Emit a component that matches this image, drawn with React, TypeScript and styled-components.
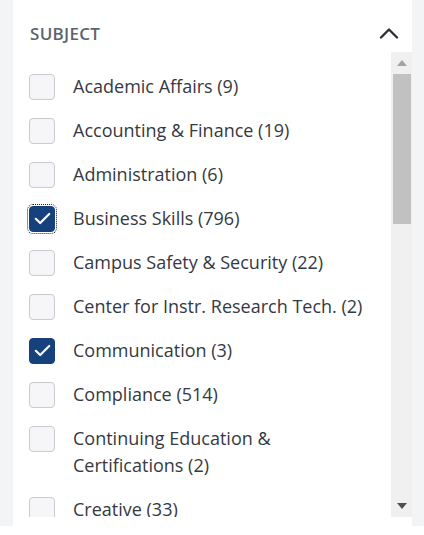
import React from 'react'
import styled, { createGlobalStyle, css } from 'styled-components'

const GlobalStyle = createGlobalStyle`
  html, body {
    margin: 0;
    padding: 0;
    background: #ffffff;
  }
  body {
    font-family: "Open Sans", "Noto Sans", "Liberation Sans", sans-serif;
    color: #333740;
  }
`

const Sidebar = styled.div`
  margin-top: 9px;
  background: #f3f4f6;
  padding: 0 12px 7px 13px;
  width: 424px;
  height: 526px;
  box-sizing: border-box;
`

const Panel = styled.section`
  background: #ffffff;
  margin-top: -9px;
  height: 528px;
  display: flex;
  flex-direction: column;
  box-sizing: border-box;
`

const Header = styled.div`
  display: flex;
  align-items: center;
  justify-content: space-between;
  height: 52px;
  padding: 14px 13px 0 17px;
  box-sizing: border-box;
`

const Title = styled.h3`
  margin: 0;
  font-size: 17px;
  font-weight: 600;
  letter-spacing: 0.3px;
  color: #5b6371;
`

const Body = styled.div`
  display: flex;
  height: 465px;
`

const List = styled.ul`
  flex: 1;
  list-style: none;
  margin: 0;
  padding: 21px 0 0 16px;
  overflow: hidden;
  display: flex;
  flex-direction: column;
  gap: 17px;
`

const Item = styled.li`
  display: flex;
  align-items: flex-start;
  gap: 18px;
  padding-right: 20px;
`

const Box = styled.span<{ $checked: boolean; $focused?: boolean }>`
  flex: none;
  width: 26px;
  height: 26px;
  margin-top: 0.5px;
  box-sizing: border-box;
  border-radius: 4px;
  display: flex;
  align-items: center;
  justify-content: center;
  border: 1.5px solid #c9cbd0;
  background: #f6f6f8;
  ${p =>
    p.$checked &&
    css`
      background: #17417d;
      border-color: #17417d;
    `}
  ${p =>
    p.$focused &&
    css`
      outline: 1.5px dotted #222;
      outline-offset: 1px;
    `}
`

const Label = styled.span`
  font-size: 18px;
  line-height: 27px;
  color: #353942;
`

const Track = styled.div`
  flex: none;
  width: 21px;
  background: #f0f0f0;
  display: flex;
  flex-direction: column;
  align-items: center;
`

const Arrow = styled.div<{ $dark?: boolean }>`
  height: 22px;
  width: 100%;
  display: flex;
  align-items: center;
  justify-content: center;
  color: ${p => (p.$dark ? '#505050' : '#a3a3a3')};
`

const Thumb = styled.div`
  width: 18px;
  height: 150px;
  background: #c1c1c1;
`

const Spacer = styled.div`
  flex: 1;
`

const Check = () => (
  <svg width="17" height="13" viewBox="0 0 17 13" fill="none">
    <path d="M1.8 6.8 L6.2 11 L15.2 2" stroke="#fff" strokeWidth="2.2" strokeLinecap="round" strokeLinejoin="round" />
  </svg>
)

const Chevron = () => (
  <svg width="20" height="12" viewBox="0 0 20 12" fill="none">
    <path d="M2 10.5 L10 2.5 L18 10.5" stroke="#2b2f36" strokeWidth="2.4" strokeLinecap="round" strokeLinejoin="round" />
  </svg>
)

const items = [
  { label: 'Academic Affairs (9)' },
  { label: 'Accounting & Finance (19)' },
  { label: 'Administration (6)' },
  { label: 'Business Skills (796)', checked: true, focused: true },
  { label: 'Campus Safety & Security (22)' },
  { label: 'Center for Instr. Research Tech. (2)' },
  { label: 'Communication (3)', checked: true },
  { label: 'Compliance (514)' },
  { label: 'Continuing Education & Certifications (2)' },
  { label: 'Creative (33)' },
]

const App = () => (
  <>
    <GlobalStyle />
    <Sidebar>
      <Panel>
        <Header>
          <Title>SUBJECT</Title>
          <Chevron />
        </Header>
        <Body>
          <List>
            {items.map(item => (
              <Item key={item.label}>
                <Box $checked={!!item.checked} $focused={item.focused}>
                  {item.checked && <Check />}
                </Box>
                <Label>{item.label}</Label>
              </Item>
            ))}
          </List>
          <Track>
            <Arrow>
              <svg width="10" height="6" viewBox="0 0 10 6">
                <path d="M0 6 L5 0 L10 6 Z" fill="currentColor" />
              </svg>
            </Arrow>
            <Thumb />
            <Spacer />
            <Arrow $dark>
              <svg width="10" height="6" viewBox="0 0 10 6">
                <path d="M0 0 L10 0 L5 6 Z" fill="currentColor" />
              </svg>
            </Arrow>
          </Track>
        </Body>
      </Panel>
    </Sidebar>
  </>
)

export default App
